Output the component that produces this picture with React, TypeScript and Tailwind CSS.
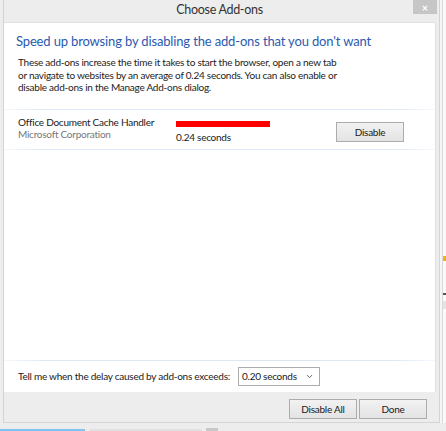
import { ChevronDown } from 'lucide-react';

const App = () => {
  return (
    <div className="w-[446px] h-[431px] bg-[#ededed] flex flex-col overflow-hidden font-['Segoe_UI','Lato',sans-serif] text-[#1a1a1a]">
      <div className="flex flex-1">
        {/* Dialog window */}
        <div className="ml-[3px] w-[437px] flex flex-col border-l border-r border-b border-[#d4d4d4]">
          {/* Title bar */}
          <div className="h-[22px] relative flex items-center justify-center">
            <span className="text-[12.5px] tracking-[-0.3px] text-[#333] -mt-[2px] ml-[-4px]">Choose Add-ons</span>
            <div className="absolute top-0 right-[2px] w-[24px] h-[14px] bg-[#c6c6c6] flex items-center justify-center">
              <span className="text-white text-[11px] leading-none font-bold">×</span>
            </div>
          </div>

          {/* White content panel */}
          <div className="mr-[3px] h-[370px] bg-white border-t border-r border-[#e0e0e0] flex flex-col">
            <div className="px-[12px] pt-[9px] h-[86px]">
              <h1 className="text-[13px] tracking-[-0.15px] text-[#2a5ab0] leading-[18px]">
                Speed up browsing by disabling the add-ons that you don't want
              </h1>
              <p className="mt-[6px] pl-[2px] text-[10px] tracking-[-0.25px] leading-[12.5px] text-[#222]">
                These add-ons increase the time it takes to start the browser, open a new tab
                <br />
                or navigate to websites by an average of 0.24 seconds. You can also enable or
                <br />
                disable add-ons in the Manage Add-ons dialog.
              </p>
            </div>

            <div className="h-[1px] bg-[linear-gradient(90deg,#f4f8fc,#dde8f5_10%,#dde8f5_90%,#f4f8fc)]" />

            {/* Add-on row */}
            <div className="h-[39px] flex items-start pl-[14px] pt-[6px] text-[10px] tracking-[-0.25px]">
              <div className="w-[158px] leading-[12px]">
                <div className="text-[#1a1a1a]">Office Document Cache Handler</div>
                <div className="text-[#777]">Microsoft Corporation</div>
              </div>
              <div className="w-[160px] pt-[5px]">
                <div className="w-[94px] h-[6px] bg-[#ff0000]" />
                <div className="leading-[12px] mt-[4px]">0.24 seconds</div>
              </div>
              <button className="w-[68px] h-[20px] mt-[6px] border border-[#acacac] bg-[linear-gradient(#f2f2f2,#e3e3e3)] text-[#1a1a1a]">
                Disable
              </button>
            </div>

            <div className="h-[1px] bg-[linear-gradient(90deg,#f4f8fc,#dde8f5_10%,#dde8f5_90%,#f4f8fc)]" />

            <div className="flex-1" />

            <div className="h-[1px] bg-[linear-gradient(90deg,#f4f8fc,#dde8f5_10%,#dde8f5_90%,#f4f8fc)]" />

            {/* Delay threshold */}
            <div className="h-[31px] flex items-center pl-[14px] gap-[8px] text-[10px] tracking-[-0.25px]">
              <span>Tell me when the delay caused by add-ons exceeds:</span>
              <div className="w-[82px] h-[19px] border border-[#acacac] bg-white flex items-center justify-between pl-[3px] pr-[5px]">
                <span>0.20 seconds</span>
                <ChevronDown size={9} strokeWidth={2.5} className="text-[#555]" />
              </div>
            </div>
          </div>

          {/* Footer */}
          <div className="flex-1 flex justify-end items-start pt-[7px] pr-[12px] gap-[2px] text-[10px] tracking-[-0.25px]">
            <button className="w-[68px] h-[20px] border border-[#acacac] bg-[linear-gradient(#f2f2f2,#e3e3e3)]">
              Disable All
            </button>
            <button className="w-[68px] h-[20px] border border-[#acacac] bg-[linear-gradient(#f2f2f2,#e3e3e3)]">
              Done
            </button>
          </div>
        </div>

        {/* Background window edge on the right */}
        <div className="flex-1 flex">
          <div className="w-[2px] bg-[#f6f6f6]" />
          <div className="flex-1 border-l border-[#d8d8d8] bg-[#fafafa] flex flex-col">
            <div className="h-[256px]" />
            <div className="h-[5px] bg-[#f0b020]" />
            <div className="h-[32px]" />
            <div className="h-[2px] bg-[#555]" />
            <div className="h-[6px]" />
            <div className="h-[8px] bg-[#e4e4e4]" />
          </div>
        </div>
      </div>

      {/* Taskbar strip */}
      <div className="h-[8px] flex items-end">
        <div className="w-[85px] h-[2px] bg-[#7ec4f0]" />
        <div className="ml-[5px] w-[112px] h-[2px] bg-[#e0e0e0]" />
        <div className="ml-[4px] w-[12px] h-[3px] bg-[#c8c8c8]" />
      </div>
    </div>
  );
};

export default App;
